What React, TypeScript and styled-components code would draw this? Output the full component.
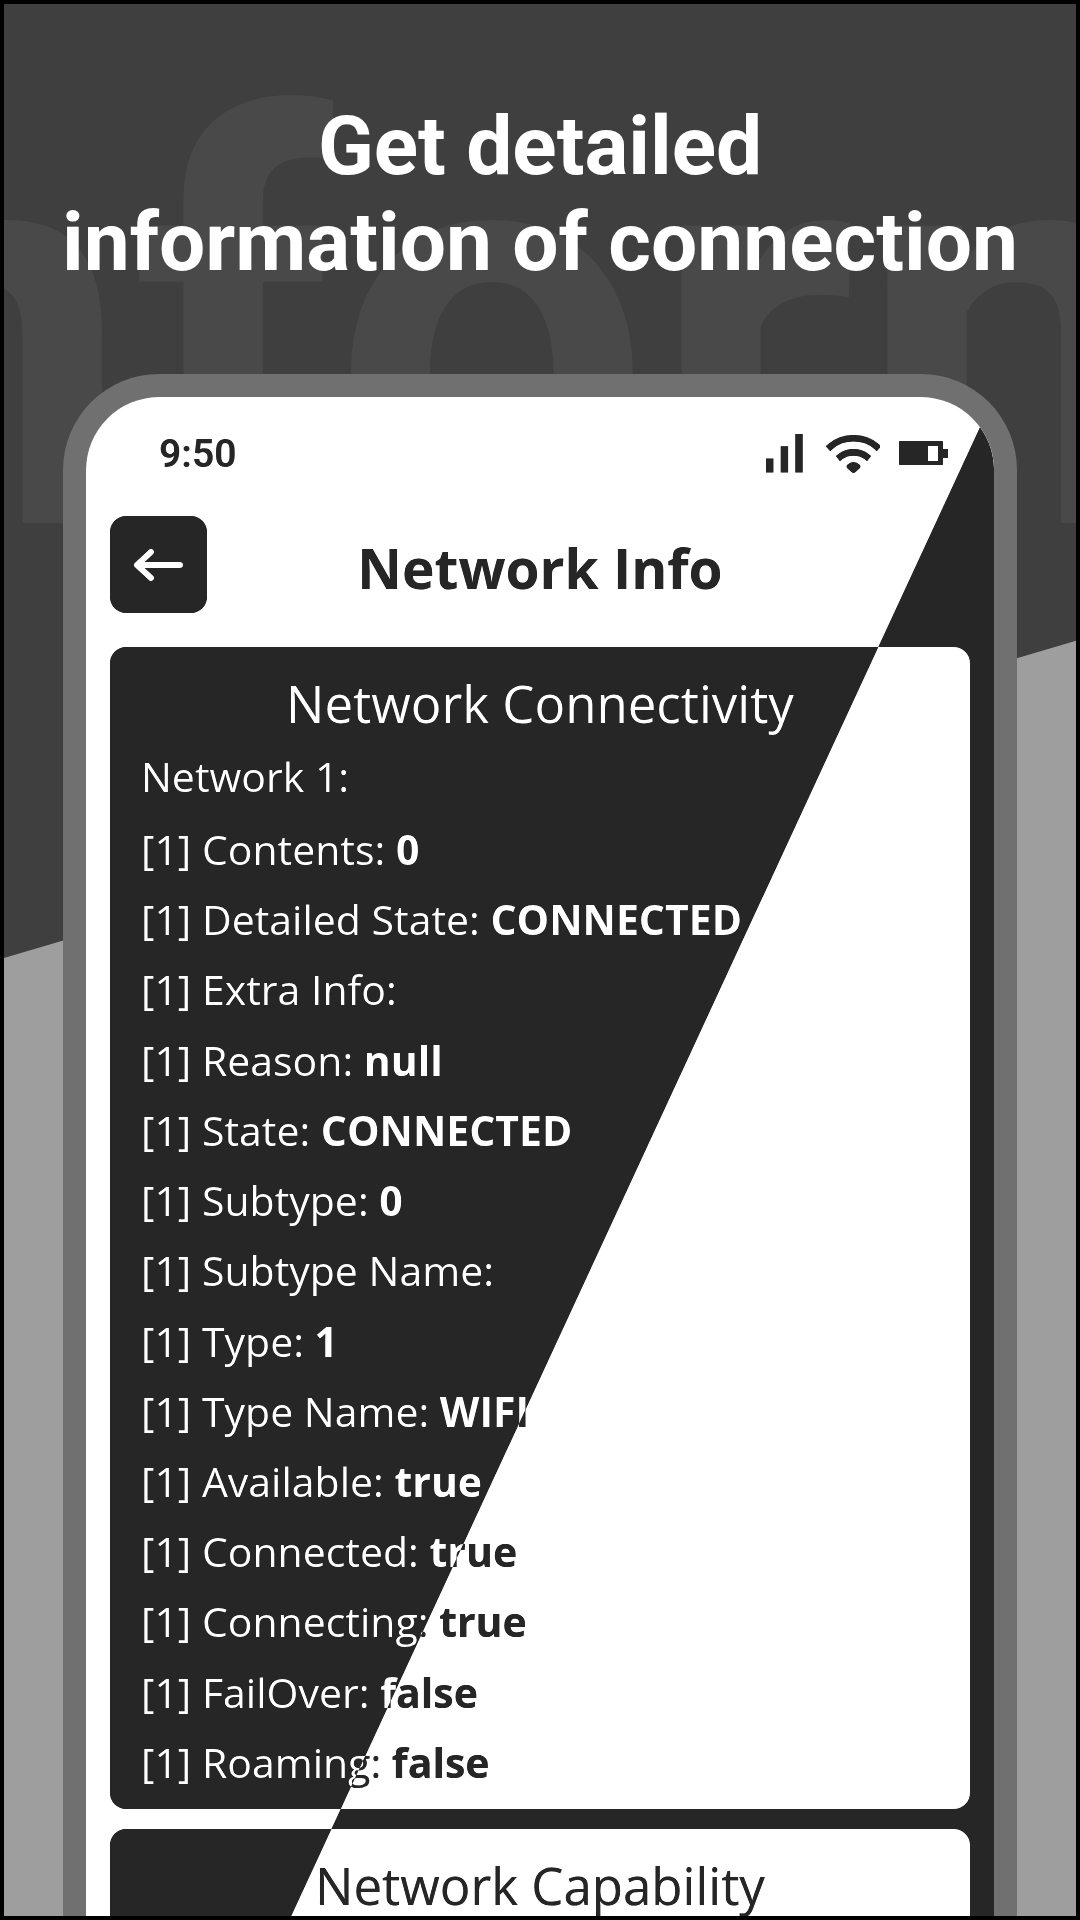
import React from "react";
import styled, { createGlobalStyle } from "styled-components";

const GlobalStyle = createGlobalStyle`
  *, *::before, *::after { box-sizing: border-box; }
  body { margin: 0; background: #000; }
`;

const Poster = styled.main`
  position: relative;
  isolation: isolate;
  display: flex;
  flex-direction: column;
  height: 100vh;
  border: 4px solid #000;
  overflow: hidden;
  background: #3f3f3f;
  font-family: "Open Sans", "Noto Sans", sans-serif;
`;

const LightFloor = styled.div`
  position: absolute;
  inset: 0;
  z-index: -1;
  background: #9e9e9e;
  clip-path: polygon(0 49.9%, 100% 33.3%, 100% 100%, 0 100%);
`;

const Watermark = styled.div`
  position: absolute;
  z-index: -2;
  top: 0;
  left: 46.8%;
  transform: translateX(-50%);
  color: #494949;
  font: 700 563px/654px Roboto, sans-serif;
  white-space: nowrap;
`;

const Headline = styled.h1`
  margin: 0;
  padding: 94px 16px 84px;
  color: #fff;
  text-align: center;
  font: 700 82px/96px Roboto, sans-serif;
`;

const Phone = styled.section`
  flex: 1;
  min-height: 0;
  display: flex;
  margin: 0 59px;
  padding: 23px 23px 0;
  border-radius: 96px 96px 0 0;
  background: #707070;
`;

/* The screen is painted in pure black and white; the two overlay layers
   invert everything right of the diagonal and lift black to charcoal. */
const Screen = styled.div`
  position: relative;
  isolation: isolate;
  flex: 1;
  min-width: 0;
  overflow: hidden;
  border-radius: 73px 73px 0 0;
  padding: 33px 24px 0;
  background: #fff;
  color: #000;

  &::before,
  &::after {
    content: "";
    position: absolute;
    inset: 0;
    pointer-events: none;
  }
  &::before {
    z-index: 1;
    background: #fff;
    mix-blend-mode: difference;
    clip-path: polygon(100% 0, 100% 100%, 22.6% 100%);
  }
  &::after {
    z-index: 2;
    background: #262626;
    mix-blend-mode: lighten;
  }
`;

const StatusBar = styled.div`
  display: flex;
  align-items: center;
  justify-content: space-between;
  height: 48px;
  padding: 0 22px 0 49px;
`;

const Clock = styled.time`
  font: 600 39px/48px Roboto, sans-serif;
`;

const StatusIcons = styled.div`
  display: flex;
  align-items: center;
  gap: 18px;
  svg { display: block; }
`;

const AppBar = styled.header`
  display: grid;
  grid-template-columns: 97px 1fr 97px;
  align-items: center;
  margin: 38px 0 34px;
`;

const BackButton = styled.button`
  display: grid;
  place-items: center;
  width: 97px;
  height: 97px;
  padding: 0;
  border: 0;
  border-radius: 16px;
  background: #000;
  color: #fff;
`;

const Title = styled.h2`
  margin: 0;
  padding-top: 6px;
  text-align: center;
  font-size: 55px;
  font-weight: 700;
  line-height: 80px;
`;

const Card = styled.article<{ $height?: number }>`
  display: flex;
  flex-direction: column;
  min-height: ${(p) => p.$height ?? 400}px;
  margin-bottom: 20px;
  padding: 19px 31px 12px;
  border-radius: 16px;
  background: #000;
  color: #fff;
`;

const CardTitle = styled.h3`
  margin: 0 0 1px;
  text-align: center;
  font-size: 51px;
  font-weight: 400;
  line-height: 74px;
`;

const Group = styled.p`
  margin: 0 0 3px;
  font-size: 41px;
  line-height: 70px;
`;

const Facts = styled.ul`
  flex: 1;
  display: flex;
  flex-direction: column;
  justify-content: space-between;
  margin: 0;
  padding: 0;
  list-style: none;
`;

const Fact = styled.li`
  font-size: 41px;
  line-height: 70px;
  white-space: nowrap;
`;

const facts: [string, string][] = [
  ["Contents", "0"],
  ["Detailed State", "CONNECTED"],
  ["Extra Info", ""],
  ["Reason", "null"],
  ["State", "CONNECTED"],
  ["Subtype", "0"],
  ["Subtype Name", ""],
  ["Type", "1"],
  ["Type Name", "WIFI"],
  ["Available", "true"],
  ["Connected", "true"],
  ["Connecting", "true"],
  ["FailOver", "false"],
  ["Roaming", "false"],
];

const SignalIcon = () => (
  <svg width="42" height="40" viewBox="0 0 42 40" aria-hidden="true">
    <path d="M0 24.500h7.400v14H0zM14.700 12.300h7.400v26.200h-7.400zM29.300 0h7.400v38.500h-7.400z" fill="currentColor" />
  </svg>
);

const WifiIcon = () => (
  <svg width="54" height="40" viewBox="0 0 54 40" fill="none" aria-hidden="true">
    <path
      d="M4.500 12.500C17 1.500 38 1.500 50.500 12.500M14.500 22.500C21.500 17 33.500 17 40.500 22.500"
      stroke="currentColor"
      strokeWidth="6.600"
      strokeLinecap="square"
    />
    <path d="M21 31Q27.500 25 34 31Q35 32.500 34 34L29.500 38Q27.500 40 25.500 38L21 34Q20 32.500 21 31Z" fill="currentColor" />
  </svg>
);

const BatteryIcon = () => (
  <svg width="50" height="26" viewBox="0 0 50 26" aria-hidden="true">
    <path
      d="M2 0h42q1 0 1 1v7h5v9h-5v6q0 1-1 1H2q-1 0-1-1V1q0-1 1-1zM30 5v15h10V5z"
      fill="currentColor"
      fillRule="evenodd"
    />
  </svg>
);

const ArrowIcon = () => (
  <svg width="50" height="34" viewBox="0 0 50 34" fill="none" aria-hidden="true">
    <path
      d="M46 17H3M17 4L3 17l14 13"
      stroke="currentColor"
      strokeWidth="6"
      strokeLinecap="round"
      strokeLinejoin="round"
    />
  </svg>
);

export default function App() {
  return (
    <>
      <GlobalStyle />
      <Poster>
        <Watermark aria-hidden="true">inform</Watermark>
        <LightFloor />
        <Headline>
          Get detailed
          <br />
          information of connection
        </Headline>
        <Phone>
          <Screen>
            <StatusBar>
              <Clock>9:50</Clock>
              <StatusIcons>
                <SignalIcon />
                <WifiIcon />
                <BatteryIcon />
              </StatusIcons>
            </StatusBar>
            <AppBar>
              <BackButton type="button" aria-label="Back">
                <ArrowIcon />
              </BackButton>
              <Title>Network Info</Title>
            </AppBar>
            <Card $height={1162}>
              <CardTitle>Network Connectivity</CardTitle>
              <Group>Network 1:</Group>
              <Facts>
                {facts.map(([name, value]) => (
                  <Fact key={name}>
                    [1] {name}: <strong>{value}</strong>
                  </Fact>
                ))}
              </Facts>
            </Card>
            <Card>
              <CardTitle>Network Capability</CardTitle>
            </Card>
          </Screen>
        </Phone>
      </Poster>
    </>
  );
}
